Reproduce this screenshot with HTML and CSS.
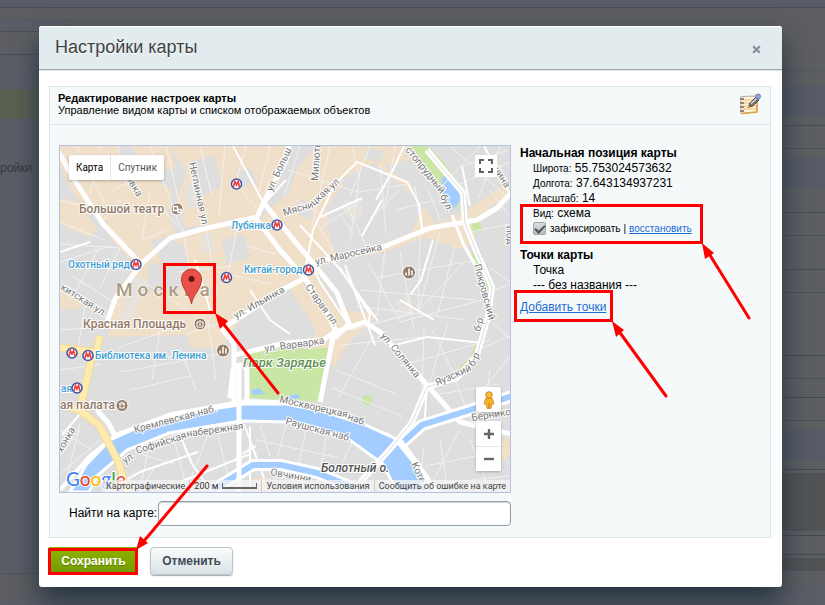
FILE: index.html
```html
<!DOCTYPE html>
<html lang="ru">
<head>
<meta charset="utf-8">
<title>Настройки карты</title>
<link rel="stylesheet" href="styles.css">
</head>
<body>
<div class="backdrop">
  <div class="backdrop-left"><span>ройки</span></div>
  <div class="backdrop-right"></div>
</div>

<main class="dialog" role="dialog" aria-labelledby="title">
  <header class="dialog-head">
    <h1 id="title">Настройки карты</h1>
    <button class="close" type="button" aria-label="Закрыть">
      <svg width="9" height="9" viewBox="0 0 9 9"><path d="M1.2 1.2 7.8 7.8M7.8 1.2 1.2 7.8" stroke="#8290a0" stroke-width="2.2"/></svg>
    </button>
  </header>

  <form class="dialog-body">
    <section class="panel">
      <header class="panel-head">
        <div>
          <h2>Редактирование настроек карты</h2>
          <p>Управление видом карты и списком отображаемых объектов</p>
        </div>
        <svg class="note-icon" width="22" height="22" viewBox="0 0 22 22">
          <path d="M2 3.500 18 3v16L2 20.500z" fill="#fff3dc" stroke="#b4a9a4"/>
          <path d="M4 7h13M4 10h13M4 13h13M4 16h13" stroke="#f3cd88" stroke-width="1.500"/>
          <path d="M18 4v15L3 20.500" fill="none" stroke="#e3a344" stroke-width="1.500"/>
          <path d="M1 6h4M1 10h4M1 14h4M1 18h4" stroke="#76655f" stroke-width="1.300"/>
          <path d="M9 14.500 11 10l6-6 3 3-6.500 6z" fill="#777" stroke="#454545"/>
          <path d="M12 10.500 18 5" stroke="#ddd" stroke-width="1.500"/>
          <circle cx="19" cy="3.500" r="2.500" fill="#92a5dc" stroke="#6f7eaf"/>
          <path d="m8 15 1.500-3 1.500 2z" fill="#f2c94b"/>
        </svg>
      </header>

      <div class="columns">
        <div class="map-column">
          <div class="map">
            <svg class="map-art" viewBox="60 146 450 346" preserveAspectRatio="xMidYMid slice" role="img" aria-label="Карта Москвы">
              <rect x="60" y="146" width="450" height="346" fill="#dedede"/>
              <g fill="#f0dfc9">
                <path d="M60 146h58v18l12-4 2 16 24 2 16 12-4 25 8 18-26 8 13 22-28 2-22-24-28-38-10-6-15-31z"/>
                <path d="M130 146h40l6 22-20 4zM170 146h122l-7 30-19 25-11 14-42 10-28 2-8-28 10-28z"/>
                <path d="M172 240l83-24 14 18 31 21v22l-34 24-28 20-16 28 18 24-24-24-24-2-6-12-78 2 7-44 28-38 6 8-2 28 28 2 16-20-8-28z"/>
                <path d="M60 198l22 4 16 24-8 12-30-14zM60 288l18 6 4 14-22 2z"/>
                <path d="M270 208l18-14 10-26 18-22h96l6 12-34 8 28 20v8l-39-31-26 16-20 28v20l10 31 40-12 34-14 13-26 12 18 34-16 40-27v18l-18 6-26 46-42-14-34 14-66 12-6 13 22 34 38 4-29 29-14 24-22-14 2-25-38-60-30-36z"/>
                <path d="M480 466l31-34v24l-25 13zM250 478h18v14h-14z"/>
              </g>
              <g fill="#dedede">
                <path d="M85 214l24 8-6 12zM190 162l24-6 8 30-22 12zM222 240l22-6 6 24-24 6zM340 180l26-14 14 8-24 20zM300 200l14 4-4 16-13-6zM368 148l18 4-8 10-14-4zM360 236l18-10 10 8-20 12zM408 244l14-2 4 10-16 6zM480 214l14-6 4 12-12 8z"/>
                <path d="M136 170l12-6 8 10-10 6zM236 172l15-4 6 14-14 5zM280 166l10-4-2 18-8 8z"/>
              </g>
              <g fill="#e6e3dc"><path d="M185 186l12-4 1 24-12 2zM200 236l12-4 4 18-12 4zM340 205l18-4 6 12-12 10zM395 303l15-6 5 16-16 6zM132 276l16 4-18 42-10-2z"/></g>
              <g fill="#c9e6a4">
                <path d="M248 351l36-6 22 4 25-2-9 55-75-4z"/>
                <path d="M411 146h16l15 14 22 31-7 19-14-22z"/>
                <path d="M471 223l8-2 3 8-8 4z"/><circle cx="367.500" cy="400" r="5"/>
                <path d="M349 482l12-2-4 8-10 4z"/>
              </g>
              <path d="M472 252l18 38-2 30-16 38-12 12" fill="none" stroke="#c9e6a4" stroke-width="4"/>
              <path d="M441 178l8-3 13 24-8 9-9-8z" fill="#a3ccff"/>
              <path d="M251 390l8-2 6 6-12 1zM289 396l8-2 4 4-12 2z" fill="#a3ccff"/>
              <g fill="none" stroke="#f1f1f1" stroke-width="1">
                <path d="M60 200l50 14 50-8 20 22M76 146l30 60M100 146l-10 50M118 146l8 40M150 146l30 80M166 146l14 60M200 146l12 50M225 146l-6 70M246 146l-10 36 20 26M270 146l-12 50M60 222l44 18M60 244l60 4-20 40M60 262l50-16M72 276l48 30M60 330l56-4M86 300l-8 50M60 370l42-6M98 250l-24 44M120 200l-20 24M150 190l-8 50 26-10M132 180l-22 12M182 226l8 46M206 230l12 66M238 222l-10 52 42 10M246 246l30 8M178 272l56-6M144 282l46 30M186 334l50-16"/>
                <path d="M118 348l60-22M120 372l100-18M130 390l60-14M160 330l-8 50M208 320l8 60M180 348l16 42"/>
                <path d="M300 146l-16 50M330 146l-18 80M352 146l6 28M370 146l-20 50M395 146l-10 62M288 170l70 22 52-8M296 200l34 20M345 200l20 44M318 230l44-30M340 214l14 20M315 218l26 48M360 172l-10 70M380 164l6 70M415 186l6 44M395 210l40-10M400 190l-30 28M440 220l-12-30M480 146l-38 40M500 146l-22 52M450 146l58 52M463 166l45-16M460 184l50-22M490 190l18 24M510 224l-40 8"/>
                <path d="M345 270l20 48M368 262l32 60M385 250l-8 66M400 252l14 78M420 236l-2 72M440 232l-22 80M455 246l-18 70M376 278l100-18M360 290l116 10M356 306l110 14M400 322l82-22M464 262l-48 52M350 330l60-16M340 345l84-8M372 338l-34 60M424 330l-2 60M448 322l-20 66M400 366l90-26M456 378l-24-48M490 268l20 14M490 292l20-8M486 318l24 20M478 350l32-14M440 394l60-10M456 382l14 36M490 370l-6 54M510 356l-40 50M336 370l60 24M332 388l70 28"/>
                <path d="M60 430l32 20M60 456l20-26M80 424l-16 66M100 440l-40 34M112 492l22-20M140 492l14-24M134 452l40 12M150 440l-8 40M172 432l16 60M210 430l-20 50M216 426l12 50M260 426l10 30M286 424l-10 40M306 430l-8 36M326 438l-6 34M256 440l84 18M260 480l40-4M300 478l8 14M330 480l-6 12M352 442l-16 34M424 448l-6 44M440 440l8 52M460 430l-30 56M470 440l20 52M426 466l80-16M434 484l76-8M492 436l18 30"/>
              </g>
              <g fill="none" stroke="#fff" stroke-width="2">
                <path d="M303 280l10-50 22-46M335 184l22-22 50 20 12 22 4 30M300 225l38 42 40 54M318 218l44-20M340 268l30 46-2 10M376 200l16-28 12-26M362 236l20-36M400 300l34 20M345 265l30 80M310 262l10 20 28 42M250 290l20 30 20 14M195 260l15 50M60 252l30-10M92 400l-30 35M60 350l36 6M433 240l-12 40-10 14M470 206l-8-40M484 146l26 48M263 202l-30-56M258 210l28-30M395 345l32-8 56 6M427 385l-3 46"/>
                <path d="M182 440l10 24 20 28M106 492l34-20 58-20M250 426v66M256 446l-14 8M244 424l20 54M180 482l70-28"/>
              </g>
              <g fill="none" stroke="#fff" stroke-width="5" stroke-linejoin="round">
                <path d="M55 146l20 35 28 43 40 42"/>
                <path d="M106 325l9-26 27-36 28-25 33-9 54-12 7-15 22-42 4-20"/>
                <path d="M263 202l20 25 30 36 24 30 12 31-14 14M255 218l25 32 25 28 22 35 10 20M305 278l-25 13-58 38 12 15v62"/>
                <path d="M315 262l68-15 47-19 47-8 20-12 16-17"/>
                <path d="M235 355l50-12 38-3 12-8 30-10 15 10 47 53 33 37 51 12M335 330l-3 12-12 60"/>
                <path d="M97 410l12 14 8 16"/>
              </g>
              <path d="M60 490l30-34 28-22 54-20 74-13 50 2 92 32 18 28" fill="none" stroke="#fff" stroke-width="4"/>
              <path d="M70 492l16-27 24-25 36-16 54-13 45-7h42l38 8 38 12 31 14 20 25 14 29h-31l-14-28-36-26-58-16-48-1-72 12-42 17-30 26-8 16z" fill="#a3ccff" stroke="#fff" stroke-width="3"/>
              <path d="M402 443l20-18 48-15 42-14M214 489l39-24 28 0 36 8 45 18" fill="none" stroke="#fff" stroke-width="12"/>
              <path d="M402 443l20-18 48-15 42-14M214 489l39-24 28 0 36 8 45 18" fill="none" stroke="#a3ccff" stroke-width="6"/>
              <path d="M427 150l36 43 2 30 12 30 15 34-4 30-11 38-20 23-30 9-15 35-20 25-47 52" fill="none" stroke="#fff" stroke-width="6"/>
              <path d="M427 150l36 43 2 30 12 30 15 34-4 30-11 38-20 23-30 9-15 35-20 25-47 52" fill="none" stroke="#ddd" stroke-width="1"/>
              <path d="M452 215l11 28 12 22" fill="none" stroke="#fff" stroke-width="3"/>
              <path d="M399 440l18 24 20 30" fill="none" stroke="#fff" stroke-width="6"/>
              <path d="M239 364v128M230 398l3-28q8-10 14 0v34" fill="none" stroke="#fff" stroke-width="5"/>
              <path d="M60 348l36 4 4-16M93 350l-8 38-6 22 20 15 19 36 10 34M60 404l19 6" fill="none" stroke="#f4d991" stroke-width="8"/>
              <path d="M60 348l36 4 4-16M93 350l-8 38-6 22 20 15 19 36 10 34M60 404l19 6" fill="none" stroke="#fdebb0" stroke-width="6"/>

              <g class="street">
                <text transform="translate(189 163) rotate(78)">Неглинная ул.</text>
                <text transform="translate(126 178) rotate(60)">овка</text>
                <text transform="translate(272 192) rotate(-65)">ул. Больш</text>
                <text transform="translate(318 181) rotate(-86)">Милюти</text>
                <text transform="translate(284 216) rotate(-16)">Мясни</text>
                <text transform="translate(314 206) rotate(-42)">цкая ул.</text>
                <text transform="translate(405 150) rotate(51)">стопрудный</text>
                <text transform="translate(440 196) rotate(66)">бул.</text>
                <text transform="translate(316 265) rotate(-13)">ул. Маросейка</text>
                <text transform="translate(236 319) rotate(-29)">ул. Ильинка</text>
                <text transform="translate(305 287) rotate(54)">Старая пл.</text>
                <text transform="translate(60 289) rotate(32)">китская ул.</text>
                <text transform="translate(474 265) rotate(75)">Покровский</text>
                <text transform="translate(480 332) rotate(-76)">б-р</text>
                <text transform="translate(380 336) rotate(50)">ул. Солянка</text>
                <text transform="translate(437 386) rotate(-24)">Яузский</text>
                <text transform="translate(474 367) rotate(-65)">б-р</text>
                <text transform="translate(265 352) rotate(-8)">ул. Варварка</text>
                <text transform="translate(135 433) rotate(-15)">Кремлевская наб.</text>
                <text transform="translate(125 464) rotate(-34)">ул.</text>
                <text transform="translate(137 454) rotate(-18)">Софийская</text>
                <text transform="translate(187 437) rotate(-8)">набережная</text>
                <text transform="translate(279 402) rotate(13)">Москворецкая</text>
                <text transform="translate(347 419) rotate(21)">наб.</text>
                <text transform="translate(285 424) rotate(15)">Раушская наб.</text>
                <text transform="translate(270 475) rotate(10)">Овчинни</text>
                <text transform="translate(472 421) rotate(-9)">Бернико</text>
                <text transform="translate(411 464) rotate(65)">Коте</text>
                <text transform="translate(62 453) rotate(-60)">хонка</text>
                <text transform="translate(492 167) rotate(58)">шина</text>
                <text transform="translate(506 226) rotate(85)">Под</text>
              </g>
              <g class="metro">
                <text x="231" y="229">Лубянка</text>
                <text x="68" y="268">Охотный ряд</text>
                <text x="244" y="273">Китай-город</text>
                <text x="95" y="359">Библиотека им. Ленина</text>
                <text x="61" y="392">ая</text>
              </g>
              <g class="sight">
                <text x="79" y="213">Большой театр</text>
                <text x="83" y="328">Красная Площадь</text>
                <text x="60" y="409">ая палата</text>
              </g>
              <text class="park" x="243" y="367">Парк Зарядье</text>
              <text class="island" x="321" y="472">Болотный о.</text>
              <text class="city" x="116" y="296">Москва</text>

              <defs>
                <g id="metro"><circle r="5" fill="#fff" stroke="#3c55a6" stroke-width="1.500"/><path d="M-3 3-1.600-2.500 0 1 1.600-2.500 3 3" fill="none" stroke="#ef3d3d" stroke-width="1.600"/></g>
              </defs>
              <use href="#metro" x="236.500" y="184"/><use href="#metro" x="277" y="225"/>
              <use href="#metro" x="136" y="264.500"/><use href="#metro" x="226.500" y="277.500"/>
              <use href="#metro" x="308.500" y="270"/><use href="#metro" x="72" y="353"/>
              <use href="#metro" x="88" y="355.500"/><use href="#metro" x="77" y="388"/>
              <g fill="#967b67" stroke="#fff">
                <circle cx="177" cy="209" r="6"/><circle cx="200" cy="324" r="6"/><circle cx="223" cy="350.500" r="6.500"/>
                <circle cx="122" cy="405.500" r="6"/><circle cx="409" cy="272.500" r="6.500"/>
              </g>
              <path d="M173.500 206.500h4v4h-4zM178 209.500h3v3h-3zM220 353.500v-3M223 353.500v-7M226 353.500v-5M406 275.500v-3M409 275.500v-7M412 275.500v-5" fill="none" stroke="#fff" stroke-width="1.500"/>
              <path d="M197 322h6v5h-6zM199 321h2M119 404l3-2 3 2zM119.500 408h5M120 404v4M124 404v4" fill="none" stroke="#fff"/>
              <circle cx="200" cy="324.500" r="1" fill="#fff"/>

              <path d="M191.500 304c-1-9-10-15-10-25a10 10 0 0 1 20 0c0 10-9 16-10 25z" fill="#ea5048" stroke="#b13b35"/>
              <circle cx="191.500" cy="279" r="3" fill="#5b150f"/>
              <text class="google" x="66" y="486"><tspan fill="#4285f4">G</tspan><tspan fill="#ea4335">o</tspan><tspan fill="#fbbc05">o</tspan><tspan fill="#4285f4">g</tspan><tspan fill="#34a853">l</tspan><tspan fill="#ea4335">e</tspan></text>
            </svg>

            <div class="map-type">
              <button type="button" class="active">Карта</button><button type="button">Спутник</button>
            </div>
            <button type="button" class="map-button fullscreen" aria-label="На весь экран">
              <svg width="14" height="14" viewBox="0 0 14 14"><path d="M1 5V1h4M9 1h4v4M13 9v4H9M5 13H1V9" fill="none" stroke="#606060" stroke-width="2"/></svg>
            </button>
            <div class="map-tools">
              <button type="button" class="map-button pegman" aria-label="Просмотр улиц">
                <svg width="12" height="18" viewBox="0 0 12 18"><path d="M2.500 7.500 1 13h2l1 4.500h4L9 13h2L9.500 7.500z" fill="#f5b02c" stroke="#d1902a" stroke-width=".8"/><circle cx="6" cy="4" r="3.300" fill="#f9bd35" stroke="#b87b20" stroke-width=".8"/><path d="M6 12v5" stroke="#c18325"/></svg>
              </button>
              <div class="zoom">
                <button type="button" class="map-button" aria-label="Увеличить"><svg width="10" height="10" viewBox="0 0 10 10"><path d="M5 0v10M0 5h10" stroke="#666" stroke-width="2.400"/></svg></button>
                <button type="button" class="map-button" aria-label="Уменьшить"><svg width="10" height="10" viewBox="0 0 10 10"><path d="M0 5h10" stroke="#666" stroke-width="2.400"/></svg></button>
              </div>
            </div>
            <div class="map-credits">
              <span>Картографические</span>
              <span class="scale">200 м <i></i></span>
              <span>Условия использования</span>
              <span>Сообщить об ошибке на карте</span>
            </div>
          </div>
          <div class="search">
            <label for="find">Найти на карте:</label>
            <input id="find" type="text">
          </div>
        </div>

        <aside class="settings">
          <h3>Начальная позиция карты</h3>
          <ul>
            <li><small>Широта:</small> 55.753024573632</li>
            <li><small>Долгота:</small> 37.643134937231</li>
            <li><small>Масштаб:</small> 14</li>
            <li><small>Вид:</small> схема</li>
            <li class="fix"><input id="fix" type="checkbox" checked><label for="fix">зафиксировать</label><span>|</span><a href="#">восстановить</a></li>
          </ul>
          <h3>Точки карты</h3>
          <ul class="points">
            <li>Точка</li>
            <li>--- без названия ---</li>
          </ul>
          <a class="add" href="#">Добавить точки</a>
        </aside>
      </div>
    </section>

    <footer class="actions">
      <button type="submit" class="save">Сохранить</button>
      <button type="button" class="cancel">Отменить</button>
    </footer>
  </form>

  <svg class="marks" viewBox="39 26 743 561" aria-hidden="true">
    <g fill="none" stroke="#f00" stroke-width="3">
      <path d="M164.500 264.500h50v48h-50zM521.500 205.500h180v37h-180zM515.500 291.500h96v29h-96zM49.500 549.500h87v24h-87z"/>
      <path d="M278 393 222 322M749 318l-41-66M666 396l-48-66M207 466l-63 75" stroke-linecap="round"/>
    </g>
    <path d="M215 313l13 8-8 8zM702 243l12 10-9 6zM612 321l12 9-8 7zM136 550l4-14 8 7z" fill="#f00"/>
  </svg>
</main>
</body>
</html>
```

FILE: styles.css
```css
* { box-sizing: border-box; }

body {
  margin: 0;
  min-height: 100vh;
  padding: 26px 43px 18px 39px;
  background: #5b5d66;
  color: #000;
  font: 12px/15px "Liberation Sans", Arial, sans-serif;
  position: relative;
  overflow: hidden;
}

h1, h2, h3, p, ul { margin: 0; padding: 0; }
ul { list-style: none; }
button { font: inherit; padding: 0; border: 0; cursor: pointer; }
a { color: #1a6dd4; }

/* Dimmed page under the dialog */
.backdrop { position: absolute; inset: 0; display: flex; }
.backdrop-left {
  width: 76px;
  padding-top: 161px;
  color: #35373b;
  background: linear-gradient(#585b66 7px, #484b50 7px 8px, #5d5e61 8px 20px, #535861 20px 21px, #5b5d66 21px 31px, #484e58 31px 32px, #5d5e63 32px 54px, #484f5b 54px 55px, #5b5d66 55px 89px, #5a6151 89px 119px, #5b5d66 119px 573px, #515359 573px 574px, #5d5d62 574px 599px, #5b5d66 599px);
}
.backdrop-right {
  flex: 1;
  background: linear-gradient(#585b66 7px, #484b50 7px 8px, #5d5e61 8px 70px, #54575c 70px 71px, #5d5e61 71px 86px, #575b65 86px 116px, #5d5e61 116px 125px, #494d52 125px 126px, #5d5e61 126px 148px, #4c5055 148px 149px, #5d5e61 149px 158px, #575b65 158px 188px, #5d5e61 188px 212px, #494d52 212px 213px, #5d5e61 213px 235px, #4c5055 235px 236px, #5d5e61 236px 269px, #494d52 269px 270px, #5d5e61 270px 292px, #4c5055 292px 293px, #5d5e61 293px 355px, #45494e 355px 356px, #5d5e61 356px 378px, #4c5055 378px 379px, #5d5e61 379px 397px, #45494e 397px 398px, #5d5e61 398px 420px, #4c5055 420px 421px, #5d5e61 421px 430px, #575b65 430px 460px, #5d5e61 460px 469px, #45494e 469px 470px, #5d5e61 470px 473px, #525355 473px 531px, #5d5e61 531px 535px, #45494e 535px 536px, #5d5e61 536px 554px, #45494e 554px 555px, #5d5e61 555px 558px, #525355 558px 571px, #5d5e61 571px 586px, #5b5d66 586px);
}

.dialog {
  position: relative;
  border-radius: 3px;
  background: #fff;
  box-shadow: 0 14px 28px rgba(26, 44, 58, .85);
}
.dialog-head {
  display: flex;
  align-items: center;
  justify-content: space-between;
  height: 44px;
  padding: 0 21px 2px 16px;
  border-top: 1px solid #fff;
  border-bottom: 1px solid #a3adaf;
  border-radius: 3px 3px 0 0;
  background: #e2ebed;
  box-shadow: 0 1px #dfe2e2;
}
.dialog-head h1 { font-size: 18px; line-height: 24px; font-weight: 400; color: #3f4345; text-shadow: 0 1px #fff; }
.close { display: flex; padding-top: 4px; background: none; }
.dialog-body { padding: 16px 11px 12px 10px; }

.panel { border: 1px solid #dae5ea; background: #f5f9fa; }
.panel-head {
  display: flex;
  align-items: center;
  justify-content: space-between;
  height: 38px;
  padding: 0 9px 3px 8px;
  border-bottom: 1px solid #dae5ea;
  font-size: 11px;
  line-height: 12px;
}
.panel-head h2 { font-size: 11px; }

.columns { display: flex; gap: 9px; padding: 20px 0 11px 9px; }
.map-column { flex: 1; }
.settings { width: 250px; padding-top: 1px; }

.map { position: relative; border: 1px solid #b5c0de; overflow: hidden; font-family: Roboto, sans-serif; font-size: 11px; }
.map-art { display: block; width: 100%; }
.map-art text { paint-order: stroke; stroke: #fff; stroke-width: 2px; stroke-linejoin: round; font-family: Roboto, sans-serif; }
.street { font-size: 10px; fill: #777; }
.metro { font-size: 10px; font-weight: 500; fill: #3f9ed2; }
.sight { font-size: 12px; font-weight: 500; fill: #927967; }
.park { font-size: 13px; font-style: italic; font-weight: 500; fill: #649252; }
.island { font-size: 12px; font-style: italic; font-weight: 500; fill: #555; }
.map-art .city { font-size: 19px; font-weight: 500; letter-spacing: 5px; fill: #ac9b84; stroke-width: 1px; }
.map-art .google { font-family: Lato, sans-serif; font-size: 19px; font-weight: 500; }

.map-type { position: absolute; top: 9px; left: 9px; display: flex; border-radius: 2px; background: #fff; box-shadow: 0 1px 3px #0004; }
.map-type button { height: 25px; padding: 0 7px; background: none; color: #565656; font-size: 10px; }
.map-type .active { color: #000; border-right: 1px solid #e6e6e6; }
.map-button { display: flex; align-items: center; justify-content: center; width: 25px; height: 25px; background: #fff; }
.fullscreen { position: absolute; top: 9px; right: 13px; width: 22px; height: 22px; }
.map-tools { position: absolute; right: 9px; bottom: 21px; display: grid; gap: 9px; }
.pegman, .zoom { border-radius: 2px; background: #fff; box-shadow: 0 1px 3px #0004; }
.zoom .map-button + .map-button { border-top: 1px solid #e6e6e6; }

.map-credits {
  position: absolute;
  right: 0;
  bottom: 0;
  display: flex;
  color: #444;
  font-size: 9px;
  line-height: 12px;
}
.map-credits span { padding: 0 4px; background: #f5f5f5b8; white-space: nowrap; }
.map-credits span + span { border-left: 1px solid #ccc; }
.map-credits .scale { display: flex; gap: 4px; align-items: center; color: #333; }
.scale i { width: 35px; height: 6px; border: solid #666; border-width: 0 1px 2px; }

.search { display: flex; align-items: center; gap: 1px; margin-top: 8px; padding-left: 10px; }
.search input {
  flex: 1;
  min-width: 0;
  height: 25px;
  padding: 0 6px;
  border: 1px solid #929da9;
  border-radius: 4px;
  background: #fff;
  box-shadow: inset 0 1px 1px #ccd3d7;
  font: inherit;
}

.settings h3 { font-size: 12px; line-height: 15px; }
.settings ul { padding-left: 13px; margin-bottom: 13px; }
.settings .points { margin-bottom: 7px; }
.settings small { font-size: 10px; }
.fix { display: flex; align-items: center; gap: 3px; height: 14px; font-size: 10px; }
.fix a { color: #1a6dd4; }
.fix input {
  appearance: none;
  width: 13px;
  height: 13px;
  margin: 0 1px 0 0;
  border: 1px solid #a3a6a8;
  border-radius: 2px;
  background: linear-gradient(#ddd, #bbb);
  display: grid;
  place-items: center;
}
.fix input:checked::before { content: ""; width: 8px; height: 4px; border: solid #4b5358; border-width: 0 0 2px 2px; rotate: -45deg; }

.actions { display: flex; gap: 12px; align-items: center; padding-top: 9px; font-weight: 700; }
.actions button { height: 28px; }
.save { width: 89px; color: #fff; background: linear-gradient(#8fb500, #6f9900); text-shadow: 0 1px #5f7d00; }
.cancel {
  width: 83px;
  border-radius: 4px;
  border: 1px solid #bcc6ca;
  background: linear-gradient(#fafcfc, #d8e2e6);
  color: #3f4b54;
  box-shadow: 0 1px 1px #aaa;
}

.marks { position: absolute; inset: 0; width: 100%; height: 100%; pointer-events: none; }
```
